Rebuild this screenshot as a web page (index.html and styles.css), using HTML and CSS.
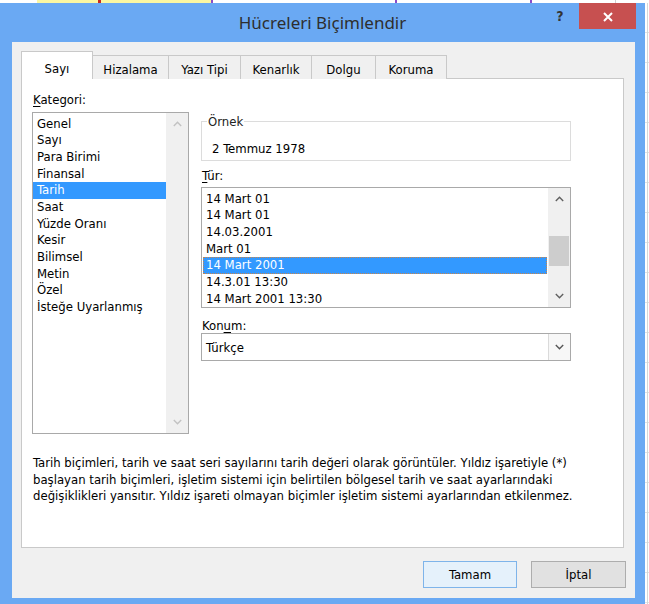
FILE: index.html
```html
<!DOCTYPE html>
<html lang="tr">
<head>
<meta charset="utf-8">
<title>Hücreleri Biçimlendir</title>
<link rel="stylesheet" href="styles.css">
</head>
<body>
  <!-- spreadsheet row peeking above the dialog -->
  <div class="sheet-top">
    <span class="cw w37"></span>
    <span class="cy w61"></span><span class="cr"></span><span class="cy w110"></span>
    <span class="cv"></span>
    <span class="cw w182"></span>
    <span class="cv"></span>
    <span class="cw w133"></span>
    <span class="cv"></span>
    <span class="cw w83"></span>
    <span class="cg"></span>
    <span class="cw grow"></span>
  </div>

  <div class="desk">
    <div class="dialog">
      <div class="titlebar">
        <div class="title">Hücreleri Biçimlendir</div>
        <div class="controls">
          <span class="help">?</span>
          <span class="close">
            <svg width="10" height="10" viewBox="0 0 10 10"><path d="M1 1 L9 9 M9 1 L1 9" stroke="#fff" stroke-width="2" fill="none"/></svg>
          </span>
        </div>
      </div>

      <div class="client">
        <div class="tabs">
          <div class="tab active t1">Sayı</div>
          <div class="tab t2">Hizalama</div>
          <div class="tab t3">Yazı Tipi</div>
          <div class="tab t4">Kenarlık</div>
          <div class="tab t5">Dolgu</div>
          <div class="tab t6">Koruma</div>
        </div>

        <div class="panel">
          <div class="cols">
            <div class="left">
              <div class="label"><u>K</u>ategori:</div>
              <div class="listbox cat">
                <ul class="items">
                  <li>Genel</li>
                  <li>Sayı</li>
                  <li>Para Birimi</li>
                  <li>Finansal</li>
                  <li class="sel">Tarih</li>
                  <li>Saat</li>
                  <li>Yüzde Oranı</li>
                  <li>Kesir</li>
                  <li>Bilimsel</li>
                  <li>Metin</li>
                  <li>Özel</li>
                  <li>İsteğe Uyarlanmış</li>
                </ul>
                <div class="vscroll">
                  <span class="arrow off"><svg width="9" height="6" viewBox="0 0 9 6"><polyline points="0.8,5 4.5,1.3 8.2,5" fill="none" stroke="currentColor" stroke-width="1.4"/></svg></span>
                  <span class="track"></span>
                  <span class="arrow off"><svg width="9" height="6" viewBox="0 0 9 6"><polyline points="0.8,1 4.5,4.7 8.2,1" fill="none" stroke="currentColor" stroke-width="1.4"/></svg></span>
                </div>
              </div>
            </div>

            <div class="right">
              <fieldset class="sample">
                <legend>Örnek</legend>
                <div class="sample-text">2 Temmuz 1978</div>
              </fieldset>

              <div class="label gap-tur"><u>T</u>ür:</div>
              <div class="listbox types">
                <ul class="items">
                  <li>14 Mart 01</li>
                  <li>14 Mart 01</li>
                  <li>14.03.2001</li>
                  <li>Mart 01</li>
                  <li class="sel focus">14 Mart 2001</li>
                  <li>14.3.01 13:30</li>
                  <li>14 Mart 2001 13:30</li>
                </ul>
                <div class="vscroll">
                  <span class="arrow"><svg width="9" height="6" viewBox="0 0 9 6"><polyline points="0.8,5 4.5,1.3 8.2,5" fill="none" stroke="currentColor" stroke-width="1.4"/></svg></span>
                  <span class="track"><span class="thumb"></span></span>
                  <span class="arrow"><svg width="9" height="6" viewBox="0 0 9 6"><polyline points="0.8,1 4.5,4.7 8.2,1" fill="none" stroke="currentColor" stroke-width="1.4"/></svg></span>
                </div>
              </div>

              <div class="label gap-konum">Kon<u>u</u>m:</div>
              <div class="combo">
                <span class="value">Türkçe</span>
                <span class="drop"><svg width="9" height="6" viewBox="0 0 9 6"><polyline points="0.8,1 4.5,4.7 8.2,1" fill="none" stroke="currentColor" stroke-width="1.4"/></svg></span>
              </div>
            </div>
          </div>

          <p class="desc">Tarih biçimleri, tarih ve saat seri sayılarını tarih değeri olarak görüntüler. Yıldız işaretiyle (*)<br>başlayan tarih biçimleri, işletim sistemi için belirtilen bölgesel tarih ve saat ayarlarındaki<br>değişiklikleri yansıtır. Yıldız işareti olmayan biçimler işletim sistemi ayarlarından etkilenmez.</p>
        </div>

        <div class="buttons">
          <button class="btn default">Tamam</button>
          <button class="btn">İptal</button>
        </div>
      </div>
    </div>
    <div class="sheet-side"></div>
  </div>
</body>
</html>
```

FILE: styles.css
```css
* { box-sizing: border-box; }

html, body {
  margin: 0;
  padding: 0;
}

body {
  width: 649px;
  height: 604px;
  overflow: hidden;
  background: #fff;
  font-family: "DejaVu Sans Condensed", "DejaVu Sans", sans-serif;
  font-stretch: condensed;
  font-size: 13px;
  color: #000;
}

/* spreadsheet strip above the window */
.sheet-top {
  display: flex;
  height: 3px;
}
.sheet-top span { display: block; height: 3px; }
.cw { background: #fff; }
.cy { background: #fbf7a2; }
.cr { width: 3px; background: #c8281e; }
.cv { width: 2px; background: #8a4bc9; }
.cg { width: 1px; background: #d0d0d0; }
.w37 { width: 37px; }
.w61 { width: 61px; }
.w110 { width: 110px; }
.w182 { width: 182px; }
.w133 { width: 133px; }
.w83 { width: 83px; }
.grow { flex: 1; }

.desk {
  display: flex;
  height: 601px;
}

.sheet-side {
  flex: 1;
  background:
    linear-gradient(to right, transparent 2px, #d6d6d6 2px, #d6d6d6 3px, transparent 3px),
    repeating-linear-gradient(to bottom, #fff 0, #fff 29px, #e2e2e2 29px, #e2e2e2 30px);
}

/* window */
.dialog {
  width: 645px;
  height: 601px;
  background: #6aa9f3;
  display: flex;
  flex-direction: column;
}

.titlebar {
  height: 39px;
  display: flex;
  padding-left: 95px;
}

.title {
  flex: 1;
  text-align: center;
  font-family: "Noto Sans", "Open Sans", sans-serif;
  font-stretch: normal;
  font-size: 17px;
  line-height: 40px;
  color: #2e2e2e;
}

.controls {
  width: 95px;
  display: flex;
  align-items: flex-start;
}

.help {
  width: 20px;
  height: 26px;
  line-height: 26px;
  margin-right: 9px;
  text-align: center;
  font-family: "DejaVu Sans", sans-serif;
  font-weight: bold;
  font-size: 14px;
  color: #333;
}

.close {
  width: 57px;
  height: 26px;
  background: #c75050;
  display: flex;
  align-items: center;
  justify-content: center;
  padding-top: 1px;
}

.client {
  width: 623px;
  height: 556px;
  margin-left: 12px;
  background: #f0f0f0;
  padding: 9px 0 0 9px;
}

/* tab strip */
.tabs {
  display: flex;
  align-items: flex-end;
  height: 28px;
}

.tab {
  height: 24px;
  padding-top: 5px;
  line-height: 17px;
  text-align: center;
  background: #f0f0f0;
  border: 1px solid #c9c9c9;
  border-left: none;
  border-bottom: none;
  white-space: nowrap;
}

.tab.active {
  height: 28px;
  padding-top: 8px;
  background: #fff;
  border-left: 1px solid #c9c9c9;
  position: relative;
  z-index: 1;
}

.t1 { width: 72px; }
.t2 { width: 76px; }
.t3 { width: 72px; }
.t4 { width: 71px; }
.t5 { width: 64px; }
.t6 { width: 71px; }

.panel {
  width: 603px;
  height: 470px;
  margin-top: -1px;
  background: #fff;
  border: 1px solid #c9c9c9;
  padding: 12px 0 0 10px;
}

.cols {
  display: flex;
  gap: 12px;
  height: 343px;
}

.left { width: 157px; }
.right { width: 370px; }

.label {
  line-height: 17px;
  padding-left: 1px;
  margin-bottom: 4px;
  white-space: nowrap;
}

.label u { text-decoration-thickness: 1px; text-underline-offset: 2px; }

/* list boxes */
.listbox {
  display: flex;
  border: 1px solid #a9a9a9;
  background: #fff;
}

.cat { height: 322px; }
.types { height: 121px; }

.items {
  list-style: none;
  margin: 0;
  padding: 2.6px 0 0 0;
  flex: 1;
  overflow: hidden;
}

.items li {
  height: 16.7px;
  line-height: 16.7px;
  padding-left: 4px;
  white-space: nowrap;
}

.items li.sel {
  background: #3399ff;
  color: #fff;
}

.types .items li.sel {
  margin: 0 1px;
  padding-left: 2px;
  line-height: 14.7px;
  border: 1px dotted #c9854a;
}

.vscroll {
  width: 22px;
  background: #f0f0f0;
  display: flex;
  flex-direction: column;
}

.arrow {
  height: 22px;
  display: flex;
  align-items: center;
  justify-content: center;
  color: #606060;
}

.arrow.off { color: #c2c2c2; }

.track {
  flex: 1;
  padding: 0 1px;
}

.thumb {
  display: block;
  height: 30px;
  margin-top: 26px;
  background: #cdcdcd;
}

/* sample group */
.sample {
  margin: 22px 0 0 0;
  padding: 10px 6px 3px 5px;
  border: 1px solid #dcdcdc;
  min-inline-size: 0;
}

.sample legend {
  padding: 0 1px;
  line-height: 17px;
  color: #222;
}

.sample-text {
  line-height: 17px;
  padding-left: 5px;
}

.gap-tur { margin-top: 6px; margin-bottom: 3px; }
.gap-konum { margin-top: 9px; margin-bottom: -1px; }

/* combo box */
.combo {
  height: 28px;
  display: flex;
  border: 1px solid #a9a9a9;
  background: #fff;
}

.combo .value {
  flex: 1;
  line-height: 24px;
  padding: 2px 0 0 4px;
}

.combo .drop {
  width: 22px;
  border-left: 1px solid #dadada;
  background: #f7f7f7;
  display: flex;
  align-items: center;
  justify-content: center;
  color: #555;
}

.desc {
  margin: 21px 0 0 0;
  padding-left: 1px;
  line-height: 16.5px;
  white-space: nowrap;
}

/* dialog buttons */
.buttons {
  display: flex;
  justify-content: flex-end;
  gap: 14px;
  margin-top: 13px;
  margin-right: 9px;
}

.btn {
  height: 27px;
  width: 95px;
  font: inherit;
  font-stretch: condensed;
  color: #000;
  background: #e1e1e1;
  border: 1px solid #adadad;
  padding: 0;
}

.btn.default {
  width: 94px;
  background: #e5f1fb;
  border-color: #7eb4ea;
}
```
